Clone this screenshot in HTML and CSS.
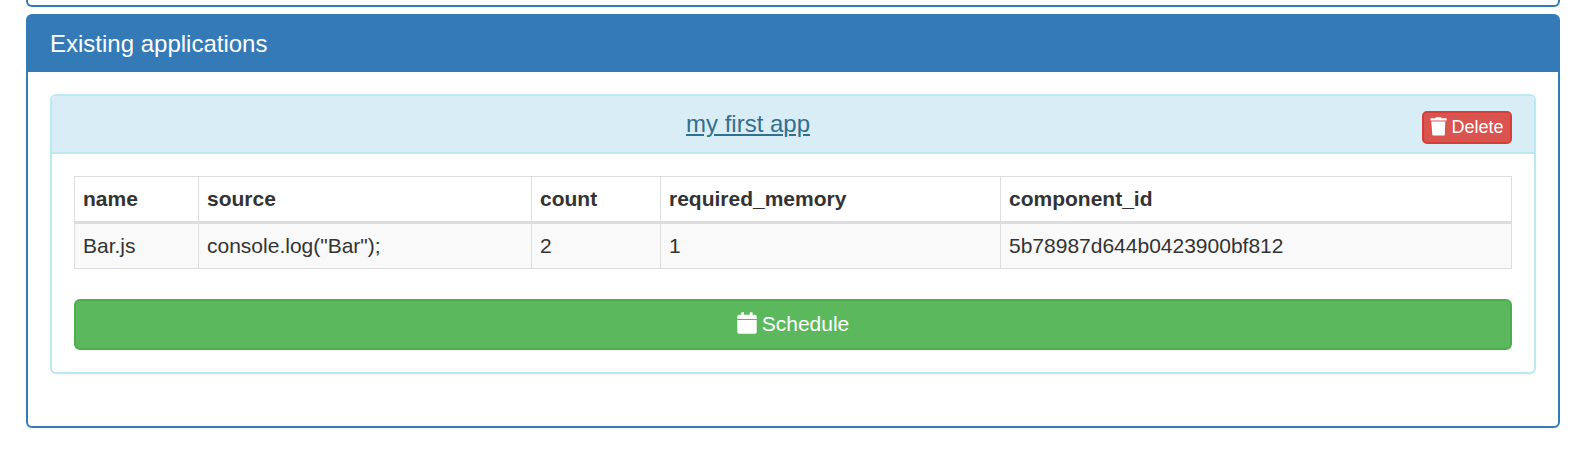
FILE: index.html
```html
<!DOCTYPE html>
<html lang="en">
<head>
<meta charset="utf-8">
<title>Applications</title>
<link rel="stylesheet" href="styles.css">
</head>
<body>
<main class="page">
  <section class="panel panel-primary panel-previous"></section>
  <section class="panel panel-primary panel-apps">
    <header class="panel-heading">
      <h3 class="panel-title">Existing applications</h3>
    </header>
    <div class="panel-body">
      <article class="panel panel-info">
        <header class="app-heading">
          <h3 class="app-title"><a class="app-link" href="#">my first app</a></h3>
          <button class="btn btn-danger" type="button">
            <svg class="icon-trash" viewBox="0 0 17 19" aria-hidden="true"><path d="M0.3 2Q0.3 1.2 1.1 1.2H5.2L6 0.3H11L11.8 1.2H15.9Q16.7 1.2 16.7 2V3.6H0.3ZM1.3 4.4H15.3L14.8 17.4Q14.7 18.6 13.5 18.6H3.6Q2.4 18.6 2.3 17.4Z"/></svg>
            <span>Delete</span>
          </button>
        </header>
        <div class="app-body">
          <table class="table">
            <colgroup><col class="col-name"><col class="col-source"><col class="col-count"><col class="col-memory"><col class="col-id"></colgroup>
            <thead>
              <tr><th>name</th><th>source</th><th>count</th><th>required_memory</th><th>component_id</th></tr>
            </thead>
            <tbody>
              <tr><td>Bar.js</td><td>console.log("Bar");</td><td>2</td><td>1</td><td>5b78987d644b0423900bf812</td></tr>
            </tbody>
          </table>
          <button class="btn btn-success" type="button">
            <svg class="icon-calendar" viewBox="0 0 20 22" aria-hidden="true"><path d="M0.3 7V4.6Q0.3 2.8 2.1 2.8H4.3V0.3H7V2.8H12.8V0.3H15.5V2.8H17.9Q19.7 2.8 19.7 4.6V7ZM0.3 8.1H19.7V20Q19.7 21.7 18 21.7H2Q0.3 21.7 0.3 20Z"/></svg>
            <span>Schedule</span>
          </button>
        </div>
      </article>
    </div>
  </section>
</main>
</body>
</html>
```
FILE: styles.css
```css
* {
  box-sizing: border-box;
}

body {
  margin: 0;
  background: #fff;
  color: #333;
  font: 21px/30px "Liberation Sans", Arial, sans-serif;
}

.page {
  height: 452px;
  padding: 0 19px 0 26px;
  overflow: hidden;
}

.panel {
  border: 2px solid;
  border-radius: 6px;
  background: #fff;
  box-shadow: 0 1px 2px rgba(0, 0, 0, 0.05);
}

.panel-primary {
  border-color: #337ab7;
}

.panel-info {
  border-color: #bce8f1;
  height: 280px;
}

.panel-previous {
  height: 7px;
  margin-bottom: 7px;
  border-top: 0;
  border-radius: 0 0 6px 6px;
}

.panel-apps {
  height: 414px;
}

.panel-heading {
  height: 56px;
  padding: 14px 22px;
  background: #337ab7;
  color: #fff;
}

.panel-title,
.app-title {
  margin: 0;
  font-size: 24px;
  font-weight: 400;
  line-height: 28px;
}

.panel-body {
  padding: 22px;
}

.app-heading {
  display: grid;
  grid-template-columns: 1fr 90px;
  height: 58px;
  padding: 14px 22px 0;
  border-bottom: 2px solid #bce8f1;
  border-radius: 4px 4px 0 0;
  background: #d9edf7;
}

.app-title {
  text-align: center;
}

.app-link {
  color: #31708f;
  text-decoration: underline;
}

.app-body {
  padding: 22px;
}

.table {
  width: 1438px;
  margin: 0 0 30px;
  border: solid #ddd;
  border-width: 1px 0 0 1px;
  border-spacing: 0;
  table-layout: fixed;
}

.table th,
.table td {
  height: 45px;
  padding: 0 8px;
  border: solid #ddd;
  border-width: 0 1px 1px 0;
  text-align: left;
}

.table th {
  height: 47px;
  border-bottom-width: 3px;
}

.table td {
  background: #f9f9f9;
}

.col-name {
  width: 124px;
}

.col-source {
  width: 333px;
}

.col-count {
  width: 129px;
}

.col-memory {
  width: 340px;
}

.col-id {
  width: 511px;
}

.btn {
  display: flex;
  align-items: center;
  justify-content: center;
  gap: 5px;
  padding: 0;
  border: 2px solid;
  color: #fff;
  font-family: inherit;
}

.btn svg {
  fill: currentColor;
}

.btn-danger {
  gap: 4px;
  width: 90px;
  height: 33px;
  margin-top: 1px;
  border-color: #d43f3a;
  border-radius: 5px;
  background: #d9534f;
  font-size: 18px;
  line-height: 27px;
}

.btn-success {
  width: 100%;
  height: 51px;
  padding-bottom: 2px;
  border-color: #4cae4c;
  border-radius: 6px;
  background: #5cb85c;
  font-size: 21px;
  line-height: 30px;
}

.icon-trash {
  width: 17px;
  height: 19px;
  margin-bottom: 2px;
}

.icon-calendar {
  width: 20px;
  height: 22px;
  margin-bottom: 2px;
}
```
